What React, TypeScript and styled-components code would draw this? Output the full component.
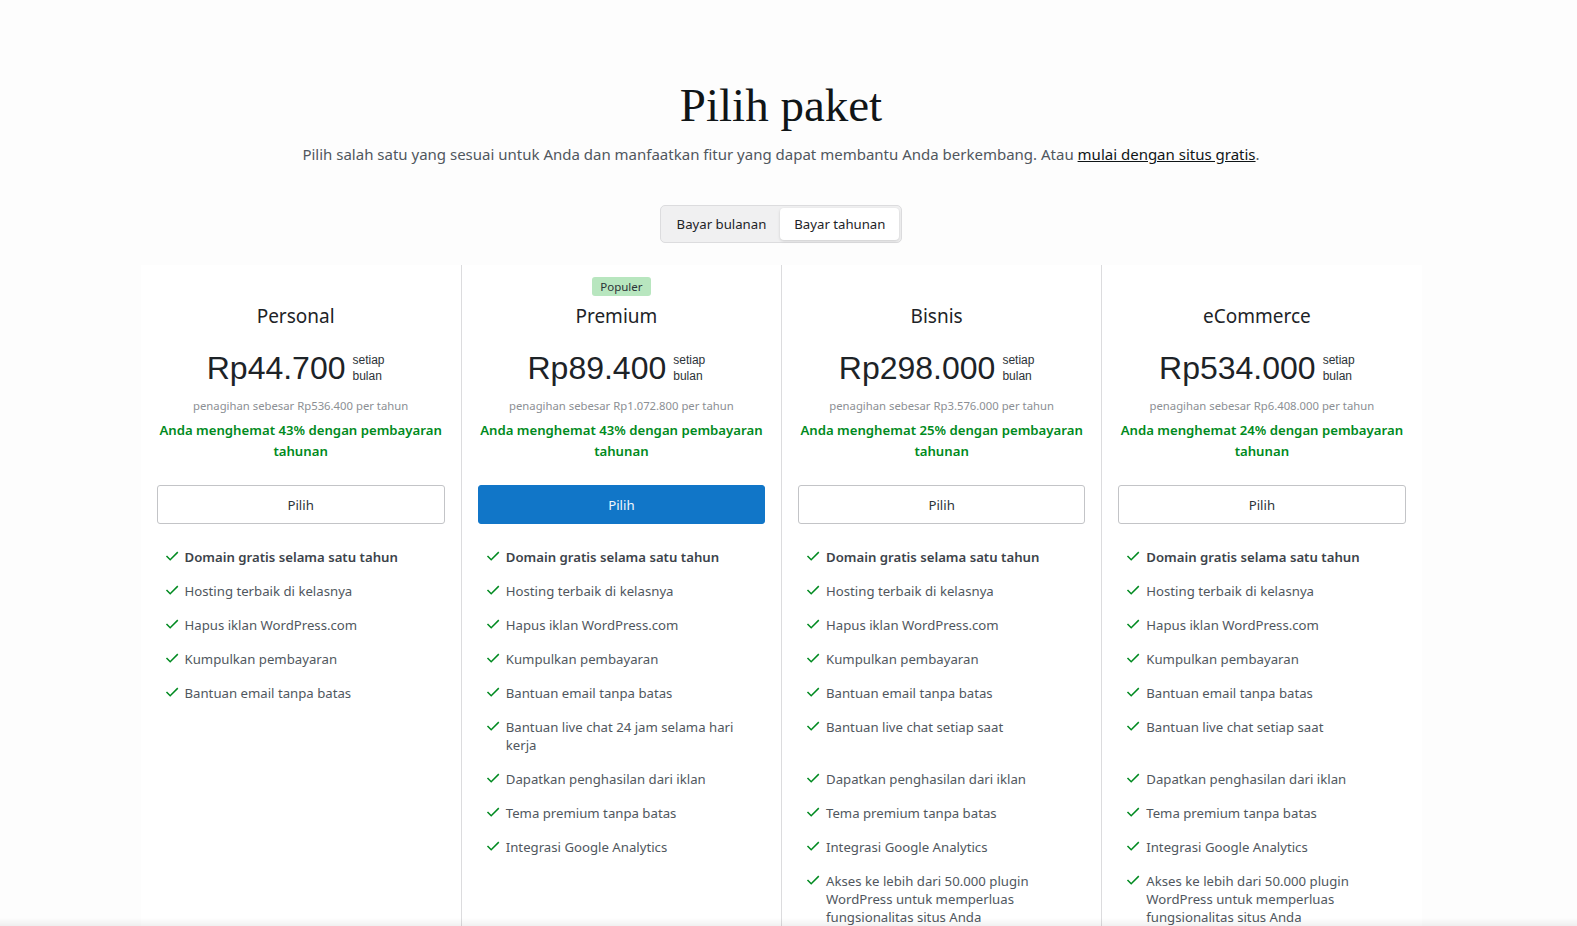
import React from "react";
import styled, { createGlobalStyle } from "styled-components";

const GlobalStyle = createGlobalStyle`
  html, body {
    margin: 0;
    padding: 0;
    background: #fdfdfd;
    overflow: hidden;
    height: 926px;
  }
  body {
    font-family: "Noto Sans", "Open Sans", sans-serif;
    color: #50575e;
  }
  * { box-sizing: border-box; }
`;

const Page = styled.main`
  padding: 75px 15px 0 0;
  display: flex;
  flex-direction: column;
  align-items: center;
`;

const Title = styled.h1`
  margin: 0;
  font-family: "Liberation Serif", "Times New Roman", serif;
  font-weight: 400;
  font-size: 47px;
  line-height: 60px;
  color: #101517;
`;

const Subtitle = styled.p`
  margin: 7px 0 0;
  font-size: 15px;
  line-height: 24px;
  color: #50575e;
`;

const SubLink = styled.a`
  color: #101517;
  text-decoration: underline;
`;

const Toggle = styled.div`
  margin-top: 39px;
  display: flex;
  padding: 2px;
  background: #f0f0f1;
  border: 1px solid #dcdcde;
  border-radius: 5px;
  height: 38px;
`;

const ToggleOption = styled.button<{ $active?: boolean }>`
  border: 0;
  font: inherit;
  font-size: 13.2px;
  color: #1d2327;
  padding: 0 14px;
  border-radius: 4px;
  cursor: pointer;
  background: ${(p) => (p.$active ? "#fff" : "transparent")};
  box-shadow: ${(p) => (p.$active ? "0 1px 3px rgba(0,0,0,0.15)" : "none")};
`;

const Plans = styled.section`
  margin-top: 22px;
  width: 1281px;
  background: #fff;
  display: grid;
  grid-template-columns: repeat(4, 1fr);
  grid-template-rows: repeat(14, auto);
  grid-auto-flow: column;
`;

const Cell = styled.div<{ $first?: boolean }>`
  border-left: ${(p) => (p.$first ? "none" : "1px solid #dcdcde")};
`;

const Header = styled(Cell)`
  display: flex;
  flex-direction: column;
  align-items: center;
  padding: 12px 16px 16px;
`;

const BadgeSlot = styled.div`
  height: 19px;
  display: flex;
  justify-content: center;
`;

const Badge = styled.span`
  background: #b8e6bf;
  color: #2c3338;
  font-size: 11.5px;
  line-height: 19px;
  padding: 0 8px;
  border-radius: 3px;
`;

const PlanName = styled.h2`
  margin: 6px 0 0;
  padding-right: 10px;
  font-size: 19px;
  line-height: 28px;
  font-weight: 400;
  color: #1d2327;
`;

const PriceRow = styled.div`
  margin-top: 18px;
  padding-right: 10px;
  display: flex;
  align-items: center;
  gap: 7px;
`;

const Price = styled.span`
  font-family: "Liberation Sans", Arial, sans-serif;
  font-size: 32px;
  line-height: 40px;
  color: #1d2327;
`;

const Period = styled.span`
  font-family: "Liberation Sans", Arial, sans-serif;
  font-size: 12px;
  line-height: 16px;
  color: #2c3338;
  display: flex;
  flex-direction: column;
`;

const Billing = styled.div`
  margin-top: 9px;
  font-size: 11.3px;
  line-height: 18px;
  color: #8c8f94;
`;

const Savings = styled.div`
  margin-top: 5px;
  font-size: 13.2px;
  line-height: 21px;
  font-weight: 600;
  color: #008a20;
  text-align: center;
`;

const PickButton = styled.button<{ $primary?: boolean }>`
  margin-top: 23px;
  width: 100%;
  height: 39px;
  font: inherit;
  font-size: 13.2px;
  border-radius: 3px;
  cursor: pointer;
  border: 1px solid ${(p) => (p.$primary ? "#1176c8" : "#c3c4c7")};
  background: ${(p) => (p.$primary ? "#1176c8" : "#fff")};
  color: ${(p) => (p.$primary ? "#f2f8fd" : "#2c3338")};
`;

const Feature = styled(Cell)<{ $bold?: boolean }>`
  display: flex;
  align-items: flex-start;
  gap: 6px;
  padding: 8px 24px 8px 24px;
  font-size: 13.2px;
  line-height: 18px;
  font-weight: ${(p) => (p.$bold ? 600 : 400)};
  color: ${(p) => (p.$bold ? "#3c434a" : "#50575e")};
`;

const CheckIcon = styled.svg`
  flex: none;
  width: 14px;
  height: 14px;
  margin-top: 1px;
  fill: none;
  stroke: #008a20;
  stroke-width: 1.5;
`;

const BottomShade = styled.div`
  position: fixed;
  left: 0;
  right: 0;
  bottom: 0;
  height: 8px;
  background: linear-gradient(to bottom, rgba(0, 0, 0, 0), rgba(0, 0, 0, 0.06));
  pointer-events: none;
`;

const Check = () => (
  <CheckIcon viewBox="0 0 14 14" aria-hidden="true">
    <polyline points="1.5,7 5.2,10.7 12.8,3.1" />
  </CheckIcon>
);

const base = [
  "Domain gratis selama satu tahun",
  "Hosting terbaik di kelasnya",
  "Hapus iklan WordPress.com",
  "Kumpulkan pembayaran",
  "Bantuan email tanpa batas",
];
const extras = [
  "Dapatkan penghasilan dari iklan",
  "Tema premium tanpa batas",
  "Integrasi Google Analytics",
];
const business = [
  "Akses ke lebih dari 50.000 plugin WordPress untuk memperluas fungsionalitas situs Anda",
  "Alat SEO tingkat lanjut",
  "Pencadangan otomatis dan pemulihan satu klik",
  "Akses SFTP dan database",
];

type Plan = {
  name: string;
  price: string;
  yearly: string;
  save: string;
  popular?: boolean;
  features: string[];
};

const plans: Plan[] = [
  { name: "Personal", price: "Rp44.700", yearly: "Rp536.400", save: "43%", features: base },
  {
    name: "Premium",
    price: "Rp89.400",
    yearly: "Rp1.072.800",
    save: "43%",
    popular: true,
    features: [...base, "Bantuan live chat 24 jam selama hari kerja", ...extras],
  },
  {
    name: "Bisnis",
    price: "Rp298.000",
    yearly: "Rp3.576.000",
    save: "25%",
    features: [...base, "Bantuan live chat setiap saat", ...extras, ...business],
  },
  {
    name: "eCommerce",
    price: "Rp534.000",
    yearly: "Rp6.408.000",
    save: "24%",
    features: [...base, "Bantuan live chat setiap saat", ...extras, ...business],
  },
];

const ROWS = 13;

export default function App() {
  return (
    <>
      <GlobalStyle />
      <Page>
        <Title>Pilih paket</Title>
        <Subtitle>
          Pilih salah satu yang sesuai untuk Anda dan manfaatkan fitur yang dapat membantu Anda
          berkembang. Atau <SubLink href="#">mulai dengan situs gratis</SubLink>.
        </Subtitle>
        <Toggle>
          <ToggleOption>Bayar bulanan</ToggleOption>
          <ToggleOption $active>Bayar tahunan</ToggleOption>
        </Toggle>
        <Plans>
          {plans.map((plan, i) => {
            const first = i === 0;
            const cells = [];
            for (let r = 0; r < ROWS; r++) {
              const f = plan.features[r];
              cells.push(
                f ? (
                  <Feature key={r} $first={first} $bold={r === 0}>
                    <Check />
                    <span>{f}</span>
                  </Feature>
                ) : (
                  <Cell key={r} $first={first} />
                )
              );
            }
            return (
              <React.Fragment key={plan.name}>
                <Header $first={first}>
                  <BadgeSlot>{plan.popular && <Badge>Populer</Badge>}</BadgeSlot>
                  <PlanName>{plan.name}</PlanName>
                  <PriceRow>
                    <Price>{plan.price}</Price>
                    <Period>
                      <span>setiap</span>
                      <span>bulan</span>
                    </Period>
                  </PriceRow>
                  <Billing>penagihan sebesar {plan.yearly} per tahun</Billing>
                  <Savings>Anda menghemat {plan.save} dengan pembayaran tahunan</Savings>
                  <PickButton $primary={plan.popular}>Pilih</PickButton>
                </Header>
                {cells}
              </React.Fragment>
            );
          })}
        </Plans>
      </Page>
      <BottomShade />
    </>
  );
}
